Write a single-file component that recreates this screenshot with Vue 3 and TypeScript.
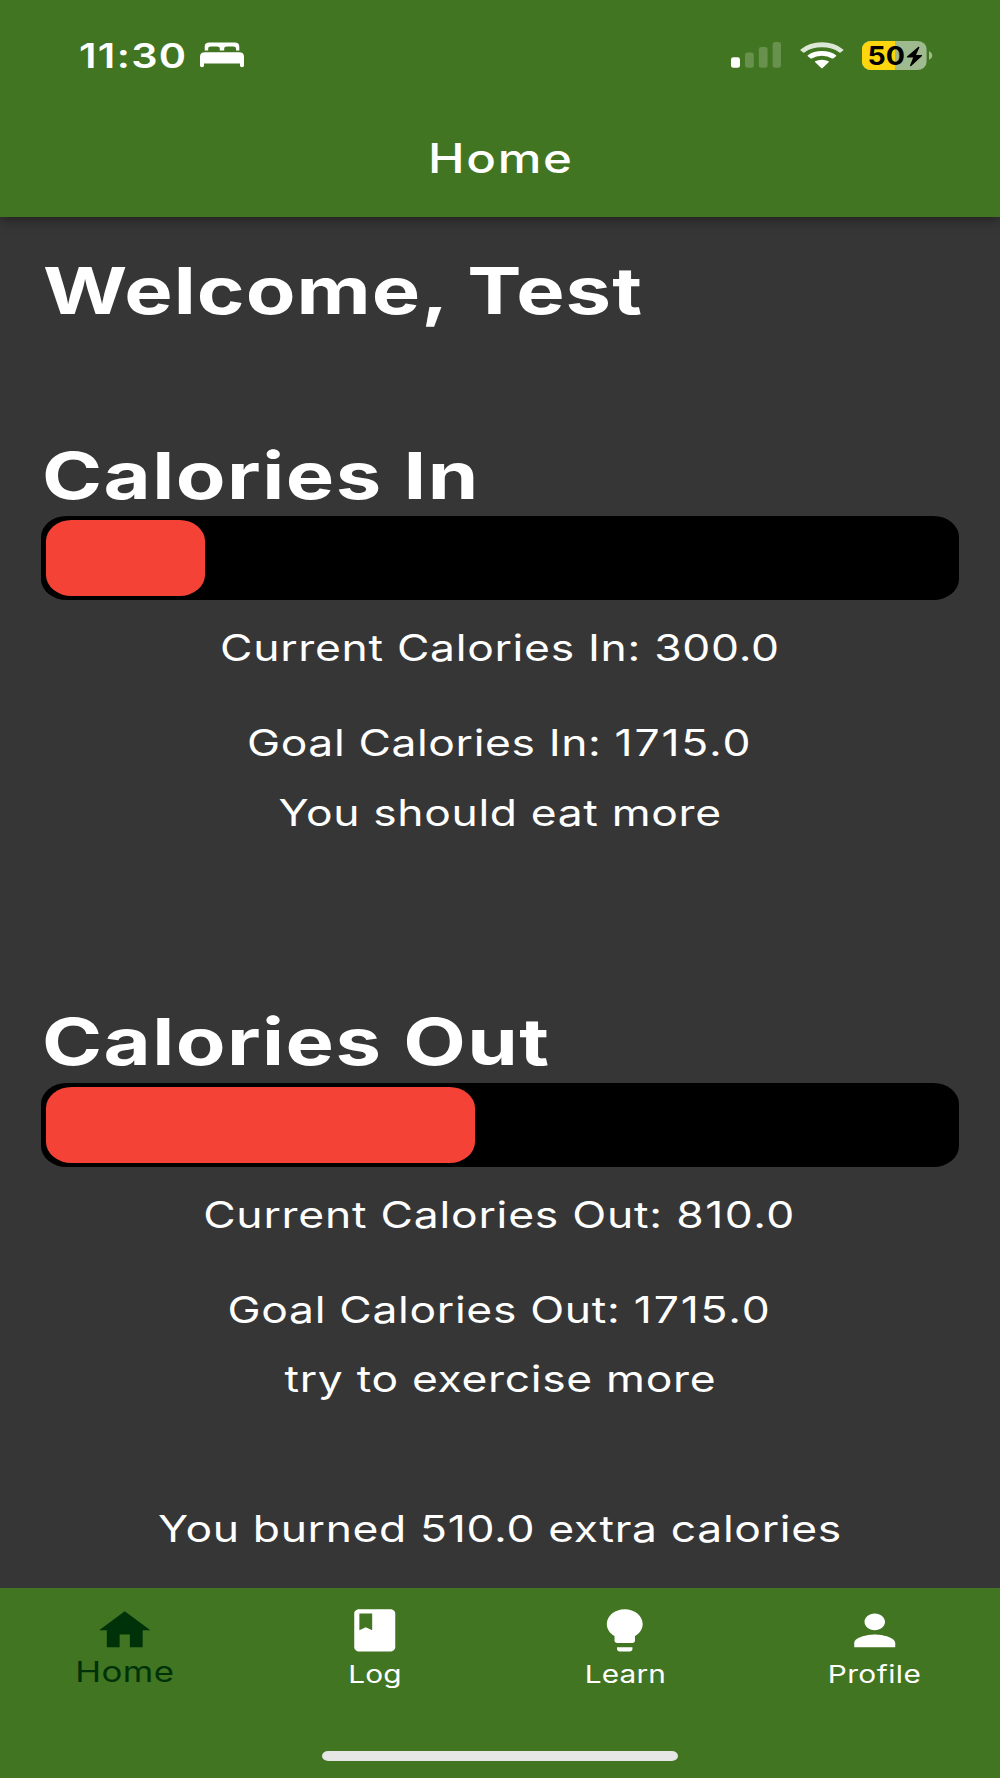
<script setup lang="ts">
interface Part { text: string; spacing: number }
interface Meter { title: Part; fill: number; current: Part[]; goal: Part[]; advice: Part[] }
interface Tab { label: Part; icon: string; active?: boolean }

const meters: Meter[] = [
  {
    title: { text: 'Calories In', spacing: 1.2 },
    fill: 159,
    current: [{ text: 'Current Calories In: 300.0', spacing: 0.57 }],
    goal: [{ text: 'Goal Calories In: ', spacing: 0.5 }, { text: '1715.0', spacing: 1.5 }],
    advice: [{ text: 'You should eat more', spacing: 0.53 }],
  },
  {
    title: { text: 'Calories Out', spacing: 1.17 },
    fill: 428.5,
    current: [{ text: 'Current Calories Out: ', spacing: 0.63 }, { text: '810.0', spacing: 1.25 }],
    goal: [{ text: 'Goal Calories Out: ', spacing: 0.56 }, { text: '1715.0', spacing: 1.55 }],
    advice: [{ text: 'try to exercise more', spacing: 0.56 }],
  },
]
const summary: Part = { text: 'You burned 510.0 extra calories', spacing: 0.54 }

const tabs: Tab[] = [
  { label: { text: 'Home', spacing: 0.4 }, icon: 'M10 20v-6h4v6h5v-8h3L12 3 2 12h3v8z', active: true },
  {
    label: { text: 'Log', spacing: 0.07 },
    icon: 'M18 2H6c-1.1 0-2 .9-2 2v16c0 1.1.9 2 2 2h12c1.1 0 2-.9 2-2V4c0-1.1-.9-2-2-2zM6 4h5v8l-2.5-1.5L6 12V4z',
  },
  {
    label: { text: 'Learn', spacing: 0.13 },
    icon: 'M9 21c0 .55.45 1 1 1h4c.55 0 1-.45 1-1v-1H9v1zm3-19C8.14 2 5 5.14 5 9c0 2.38 1.19 4.47 3 5.74V17c0 .55.45 1 1 1h6c.55 0 1-.45 1-1v-2.26c1.81-1.27 3-3.36 3-5.74 0-3.86-3.14-7-7-7z',
  },
  {
    label: { text: 'Profile', spacing: 0.38 },
    icon: 'M12 12c2.21 0 4-1.79 4-4s-1.79-4-4-4-4 1.79-4 4 1.79 4 4 4zm0 2c-2.67 0-8 1.34-8 4v2h16v-2c0-2.66-5.33-4-8-4z',
  },
]

const tracking = (part: Part) => ({ letterSpacing: `${part.spacing}px` })
</script>

<template>
  <div class="screen">
    <header class="app-bar">
      <div class="status">
        <div class="time"><span class="wide left">11:30</span></div>
        <svg class="bed" width="44" height="26" viewBox="0 0 44 26" fill="#fff">
          <path d="M4.7 8.6V4.4Q4.7.4 9.4.4H34.6Q39.3.4 39.3 4.4V8.6H36V6.8Q36 4.4 33 4.4H27Q24.2 4.4 24.2 6.8V8.6H19.8V6.8Q19.8 4.4 17 4.4H11Q8.2 4.4 8.2 6.8V8.6Z" />
          <path d="M5 10.2H39Q44 10.2 44 14.6V23.8Q44 25.2 42 25.2Q40 25.2 40 23.8V21.6H4V23.8Q4 25.2 2 25.2Q0 25.2 0 23.8V14.6Q0 10.2 5 10.2Z" />
        </svg>
        <div class="indicators">
          <svg width="50" height="26" viewBox="0 0 50 26">
            <rect x="0" y="15.3" width="9" height="10.5" rx="2.4" fill="#fff" />
            <g fill="#67914d">
              <rect x="14" y="10.5" width="8.8" height="15.3" rx="2.4" />
              <rect x="27.8" y="5" width="8.8" height="20.8" rx="2.4" />
              <rect x="41.6" y="0" width="8.4" height="25.8" rx="2.4" />
            </g>
          </svg>
          <svg class="wifi" width="44" height="27" viewBox="0 0 44 27">
            <path d="M0.6 7.4Q9.4 0.3 21.9 0.3Q34.4 0.3 43.2 7.4Q43.7 7.9 43.2 8.4L40.6 10.5Q40 10.9 39.4 10.4Q32 5.3 21.9 5.3Q11.8 5.3 4.4 10.4Q3.8 10.9 3.2 10.5L.6 8.4Q.1 7.9 .6 7.4Z" fill="#dde7d7" />
            <path d="M7.8 13.2Q13.6 9 21.9 9Q30.2 9 36 13.2Q36.6 13.7 36 14.2L33.2 16.4Q32.6 16.8 32 16.4Q27.8 13.8 21.9 13.8Q16 13.8 11.8 16.4Q11.2 16.8 10.6 16.4L7.8 14.2Q7.2 13.7 7.8 13.2Z" fill="#fff" />
            <path d="M15.2 19.3Q18 17.7 21.9 17.7Q25.8 17.7 28.6 19.3Q29.2 19.8 28.6 20.3L22.6 26Q21.9 26.6 21.2 26L15.2 20.3Q14.6 19.8 15.2 19.3Z" fill="#fff" />
          </svg>
          <svg class="battery" width="70" height="29" viewBox="0 0 70 29">
            <rect width="64.6" height="29" rx="9.4" ry="8" fill="#a0ba90" />
            <path d="M33 0H9.4A9.4 8 0 0 0 0 8V21A9.4 8 0 0 0 9.4 29H33Z" fill="#fdd60d" />
            <path d="M67 10.2Q70.2 11.6 70.2 14.5T67 18.8Z" fill="#a0ba90" />
            <text x="5.6" y="23.6" textLength="37.5" lengthAdjust="spacingAndGlyphs">50</text>
            <path d="M56.4 5.8L45 15.6Q44.4 16.6 45.6 16.6H51.2L48 24.6Q48.1 25.6 49.2 25L60 15Q60.6 14 59.4 14H54L57.4 6.4Q57.3 5.3 56.4 5.8Z" />
          </svg>
        </div>
      </div>
      <h1 class="title"><span class="wide">Home</span></h1>
    </header>

    <main class="content">
      <h2 class="heading welcome"><span class="wide left">Welcome, Test</span></h2>
      <section v-for="m in meters" :key="m.title.text" class="meter">
        <h2 class="heading"><span class="wide left" :style="tracking(m.title)">{{ m.title.text }}</span></h2>
        <div class="track"><div class="fill" :style="{ width: `${m.fill}px` }"></div></div>
        <p class="line current">
          <span class="wide"><span v-for="p in m.current" :key="p.text" :style="tracking(p)">{{ p.text }}</span></span>
        </p>
        <p class="line goal">
          <span class="wide"><span v-for="p in m.goal" :key="p.text" :style="tracking(p)">{{ p.text }}</span></span>
        </p>
        <p class="line">
          <span class="wide"><span v-for="p in m.advice" :key="p.text" :style="tracking(p)">{{ p.text }}</span></span>
        </p>
      </section>
      <p class="line"><span class="wide" :style="tracking(summary)">{{ summary.text }}</span></p>
    </main>

    <footer class="bottom">
      <nav class="tabs">
        <div v-for="t in tabs" :key="t.label.text" class="tab" :class="{ active: t.active }">
          <svg width="61.5" height="50.6" viewBox="0 0 24 24" preserveAspectRatio="none" fill="currentColor">
            <path :d="t.icon" />
          </svg>
          <span class="tab-label wide" :style="tracking(t.label)">{{ t.label.text }}</span>
        </div>
      </nav>
      <div class="home-indicator"></div>
    </footer>
  </div>
</template>

<style>
body { background: #363636; }
</style>

<style scoped>
.screen {
  display: flex;
  flex-direction: column;
  width: 1000px;
  height: 1778px;
  overflow: hidden;
  background: #363636;
  color: #fff;
  font-family: Inter, "Liberation Sans", sans-serif;
}
h1, h2, p { margin: 0; }
.wide {
  display: inline-block;
  white-space: pre;
  transform: scaleX(1.217);
}
.left { transform-origin: 0 50%; }

.app-bar {
  flex: none;
  box-sizing: border-box;
  height: 217px;
  padding-top: 35px;
  background: #417521;
  box-shadow: 0 2px 12px rgba(0, 0, 0, 0.45);
}
.status {
  display: flex;
  align-items: center;
  height: 40px;
  padding: 0 68px 0 79px;
}
.time {
  width: 121px;
  padding-top: 1px;
  font-size: 34px;
  font-weight: 600;
  line-height: 40px;
  letter-spacing: 1.1px;
}
.indicators {
  display: flex;
  align-items: center;
  margin-left: auto;
}
.wifi { margin-left: 19px; }
.battery { margin-left: 18px; overflow: visible; }
.battery text { font-size: 26px; font-weight: 700; }
.title {
  margin-top: 60px;
  padding-left: 1.5px;
  font-size: 40.4px;
  font-weight: 500;
  line-height: 48px;
  letter-spacing: 1.4px;
  text-align: center;
}

.content { flex: 1; padding: 34.5px 41px 0; }
.heading {
  padding-left: 0.8px;
  font-size: 65px;
  font-weight: 700;
  line-height: 78px;
}
.heading .wide { transform: scaleX(1.25); }
.welcome {
  padding-left: 1.8px;
  margin-bottom: 107.2px;
  letter-spacing: 0.84px;
}
.meter { height: 566.7px; }
.meter:last-of-type { height: 503.3px; }
.track {
  box-sizing: border-box;
  height: 84px;
  margin-top: 1.6px;
  padding: 4.2px 5.1px;
  border-radius: 25.6px / 21px;
  background: #000;
}
.fill {
  height: 75.6px;
  border-radius: 25.6px / 21px;
  background: #f44336;
}
.line {
  font-size: 36.5px;
  line-height: 44px;
  text-align: center;
}
.current { margin-top: 26.2px; }
.goal { margin: 50.7px 0 25.6px; }

.bottom {
  flex: none;
  display: flex;
  flex-direction: column;
  align-items: center;
  height: 190px;
  background: #417521;
}
.tabs {
  display: flex;
  width: 100%;
  height: 162.7px;
}
.tab {
  flex: 1;
  display: flex;
  flex-direction: column;
  align-items: center;
  padding-top: 16.5px;
}
.tab svg { flex: none; }
.tab-label {
  margin-top: 4.2px;
  font-size: 24.5px;
  line-height: 30px;
}
.active { color: #003209; }
.active .tab-label { margin-top: 2.4px; font-size: 28.6px; }
.home-indicator {
  width: 356px;
  height: 10.5px;
  border-radius: 6.5px / 5.25px;
  background: #e6e6e6;
}
</style>
